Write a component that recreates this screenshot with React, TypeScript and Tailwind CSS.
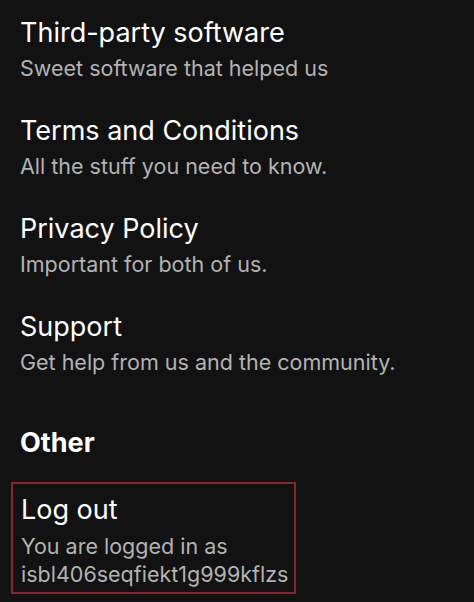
import React from "react";

const items = [
	{ title: "Third-party software", subtitle: "Sweet software that helped us" },
	{ title: "Terms and Conditions", subtitle: "All the stuff you need to know." },
	{ title: "Privacy Policy", subtitle: "Important for both of us." },
	{ title: "Support", subtitle: "Get help from us and the community." },
];

const App = () => {
	return (
		<div className="w-[474px] h-[602px] overflow-hidden bg-[#121212] font-['Inter',sans-serif]">
			<div className="flex flex-col pt-[12px]">
				{items.map((item, index) => (
					<div key={index} className="flex flex-col px-[20px] h-[98px]">
						<div className="text-[27px] leading-[42px] text-white">{item.title}</div>
						<div className="text-[21.5px] leading-[28px] text-[#b3b3b3]">{item.subtitle}</div>
					</div>
				))}

				<div className="px-[20px] pt-[19px] text-[27px] leading-[40px] font-bold text-white">Other</div>

				<div className="ml-[11px] mt-[19px] w-[285px] h-[112px] border-2 border-[#8a2531] px-[8px] pt-[4px] flex flex-col">
					<div className="text-[27px] leading-[44px] text-white">Log out</div>
					<div className="text-[21.5px] leading-[28px] text-[#b3b3b3]">
						You are logged in as
						<br />
						isbl406seqfiekt1g999kflzs
					</div>
				</div>
			</div>
		</div>
	);
};

export default App;
